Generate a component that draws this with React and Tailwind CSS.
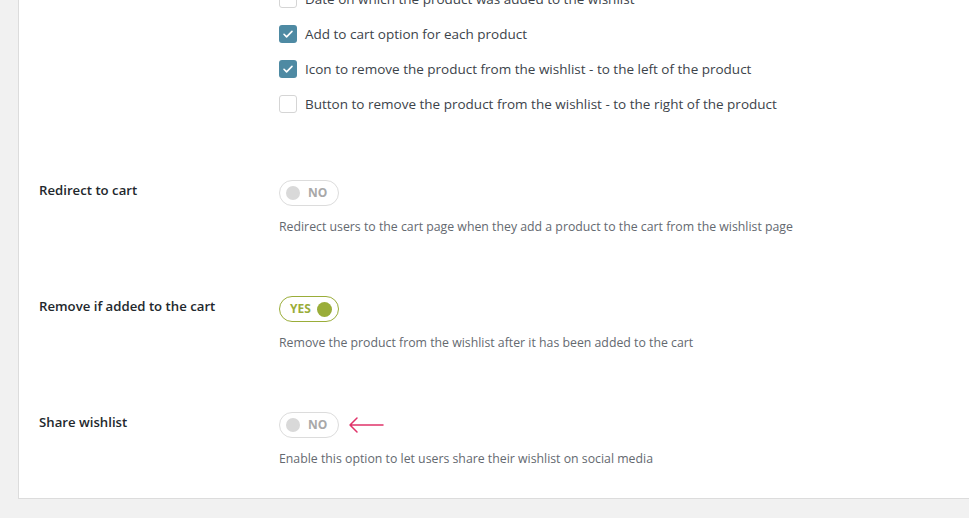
import React from "react";

const font = { fontFamily: '"Open Sans", "Noto Sans", sans-serif' };

const checks = [
  { label: "Date on which the product was added to the wishlist", on: false },
  { label: "Add to cart option for each product", on: true },
  { label: "Icon to remove the product from the wishlist - to the left of the product", on: true },
  { label: "Button to remove the product from the wishlist - to the right of the product", on: false },
];

function Checkbox({ on }) {
  if (on) {
    return (
      <span className="flex h-[18px] w-[18px] shrink-0 items-center justify-center rounded-[3px] bg-[#4e8aa3]">
        <svg width="12" height="12" viewBox="0 0 12 12" fill="none">
          <path d="M2 6.3l2.6 2.6L10 3.4" stroke="#fff" strokeWidth="1.6" strokeLinecap="round" strokeLinejoin="round" />
        </svg>
      </span>
    );
  }
  return <span className="h-[18px] w-[18px] shrink-0 rounded-[3px] border border-[#d5d5d5] bg-white" />;
}

function Toggle({ on }) {
  if (on) {
    return (
      <div className="flex h-[26px] w-[60px] items-center justify-between rounded-full border border-[#9aad39] pl-[10px] pr-[6px]">
        <span className="text-[12px] font-bold text-[#9aad39]">YES</span>
        <span className="h-[15px] w-[15px] rounded-full bg-[#9aad39]" />
      </div>
    );
  }
  return (
    <div className="flex h-[26px] w-[60px] items-center gap-[8px] rounded-full border border-[#dcdcdc] pl-[6px]">
      <span className="h-[14px] w-[14px] rounded-full bg-[#d9d9d9]" />
      <span className="text-[12px] font-bold text-[#a8a8a8]">NO</span>
    </div>
  );
}

const rows = [
  {
    label: "Redirect to cart",
    on: false,
    desc: "Redirect users to the cart page when they add a product to the cart from the wishlist page",
  },
  {
    label: "Remove if added to the cart",
    on: true,
    desc: "Remove the product from the wishlist after it has been added to the cart",
  },
  {
    label: "Share wishlist",
    on: false,
    desc: "Enable this option to let users share their wishlist on social media",
    arrow: true,
  },
];

export default function App() {
  return (
    <div className="h-[518px] overflow-hidden bg-[#f1f1f1] pl-[18px]" style={font}>
      <div className="-mt-[11px] border-b border-l border-[#dcdcdc] bg-white pb-[30px]">
        <div className="flex flex-col gap-[15px] pl-[260px]">
          {checks.map((c) => (
            <div key={c.label} className="flex items-center gap-[8px] text-[13.5px] leading-[20px] text-[#3c434a]">
              <Checkbox on={c.on} />
              <span>{c.label}</span>
            </div>
          ))}
        </div>
        <div className="mt-[66px] flex flex-col gap-[60px]">
          {rows.map((r) => (
            <div key={r.label} className="flex">
              <div className="w-[260px] pl-[20px] pt-[1px] text-[13.2px] font-semibold leading-[18px] text-[#23282d]">
                {r.label}
              </div>
              <div>
                <div className="flex items-center gap-[9px]">
                  <Toggle on={r.on} />
                  {r.arrow && (
                    <svg width="36" height="18" viewBox="0 0 36 18" fill="none">
                      <path d="M35 9H2M9 2L2 9l7 7" stroke="#e0336a" strokeWidth="1.5" strokeLinecap="round" strokeLinejoin="round" />
                    </svg>
                  )}
                </div>
                <p className="mt-[12px] text-[12.3px] leading-[18px] text-[#646970]">{r.desc}</p>
              </div>
            </div>
          ))}
        </div>
      </div>
    </div>
  );
}
